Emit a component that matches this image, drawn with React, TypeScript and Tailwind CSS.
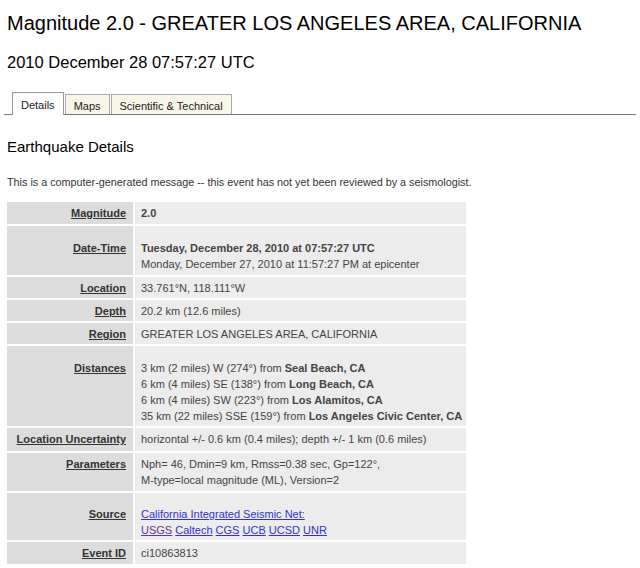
import React from 'react';

type Row = {
  label: string;
  pad: string;
  content: React.ReactNode;
};

const link = 'text-[#3333cc] underline';

const rows: Row[] = [
  { label: 'Magnitude', pad: 'pt-[3px] pb-[3px]', content: <span className="font-bold">2.0</span> },
  {
    label: 'Date-Time',
    pad: 'pt-[14px] pb-[3px]',
    content: (
      <>
        <div className="font-bold">Tuesday, December 28, 2010 at 07:57:27 UTC</div>
        <div>Monday, December 27, 2010 at 11:57:27 PM at epicenter</div>
      </>
    ),
  },
  { label: 'Location', pad: 'pt-[3px] pb-[2px]', content: '33.761°N, 118.111°W' },
  { label: 'Depth', pad: 'pt-[3px] pb-[2px]', content: '20.2 km (12.6 miles)' },
  { label: 'Region', pad: 'pt-[3px] pb-[2px]', content: 'GREATER LOS ANGELES AREA, CALIFORNIA' },
  {
    label: 'Distances',
    pad: 'pt-[14px] pb-[2px]',
    content: (
      <>
        <div>3 km (2 miles) W (274°) from <b>Seal Beach, CA</b></div>
        <div>6 km (4 miles) SE (138°) from <b>Long Beach, CA</b></div>
        <div>6 km (4 miles) SW (223°) from <b>Los Alamitos, CA</b></div>
        <div>35 km (22 miles) SSE (159°) from <b>Los Angeles Civic Center, CA</b></div>
      </>
    ),
  },
  {
    label: 'Location Uncertainty',
    pad: 'pt-[3px] pb-[4px]',
    content: 'horizontal +/- 0.6 km (0.4 miles); depth +/- 1 km (0.6 miles)',
  },
  {
    label: 'Parameters',
    pad: 'pt-[3px] pb-[3px]',
    content: (
      <>
        <div>Nph= 46, Dmin=9 km, Rmss=0.38 sec, Gp=122°,</div>
        <div>M-type=local magnitude (ML), Version=2</div>
      </>
    ),
  },
  {
    label: 'Source',
    pad: 'pt-[13px] pb-[2px]',
    content: (
      <>
        <div>
          <a href="#" className={link}>California Integrated Seismic Net:</a>
        </div>
        <div>
          <a href="#" className="text-[#663399] underline">USGS</a>{' '}
          <a href="#" className={link}>Caltech</a>{' '}
          <a href="#" className={link}>CGS</a>{' '}
          <a href="#" className={link}>UCB</a>{' '}
          <a href="#" className={link}>UCSD</a>{' '}
          <a href="#" className={link}>UNR</a>
        </div>
      </>
    ),
  },
  { label: 'Event ID', pad: 'pt-[3px] pb-[3px]', content: 'ci10863813' },
];

const tabs = ['Details', 'Maps', 'Scientific & Technical'];

export default function App() {
  return (
    <div className="min-h-[568px] bg-white px-[7px] font-['Liberation_Sans',Arial,sans-serif] text-[#222]">
      <h1 className="pt-[11px] text-[20px] leading-[24px] text-black">
        Magnitude 2.0 - GREATER LOS ANGELES AREA, CALIFORNIA
      </h1>
      <h2 className="mt-[17px] text-[16.5px] leading-[20px] text-black">2010 December 28 07:57:27 UTC</h2>

      {/* tabs */}
      <div className="-mx-[3px] mt-[20px] flex items-end gap-[1px] border-b border-[#777] pl-[8px]">
        {tabs.map((t, i) =>
          i === 0 ? (
            <div
              key={t}
              className="-mb-[1px] border border-b-0 border-[#999] bg-white px-[8px] pt-[6px] pb-[3px] text-[11px] leading-[13px] text-[#222]"
            >
              {t}
            </div>
          ) : (
            <div
              key={t}
              className="border border-b-0 border-[#aaa] bg-[#f8f6e8] px-[8px] pt-[5px] pb-[1px] text-[11px] leading-[13px] text-[#222]"
            >
              {t}
            </div>
          )
        )}
      </div>

      <h3 className="mt-[23px] text-[15px] leading-[18px] text-black">Earthquake Details</h3>
      <p className="mt-[19px] text-[10.8px] leading-[14px] text-[#333]">
        This is a computer-generated message -- this event has not yet been reviewed by a seismologist.
      </p>

      <table className="-ml-[2px] mt-[11px] w-[463px] table-fixed border-separate border-spacing-[2px] text-[11px] leading-[16px] text-[#444]">
        <tbody>
          {rows.map((r) => (
            <tr key={r.label}>
              <th
                className={`w-[126px] whitespace-nowrap bg-[#dcdcdc] pr-[7px] pl-[2px] text-right align-top font-bold text-[#333] ${r.pad}`}
              >
                <span className="underline">{r.label}</span>
              </th>
              <td className={`whitespace-nowrap bg-[#ececec] pr-[2px] pl-[6px] align-top ${r.pad}`}>
                {r.content}
              </td>
            </tr>
          ))}
        </tbody>
      </table>
    </div>
  );
}
